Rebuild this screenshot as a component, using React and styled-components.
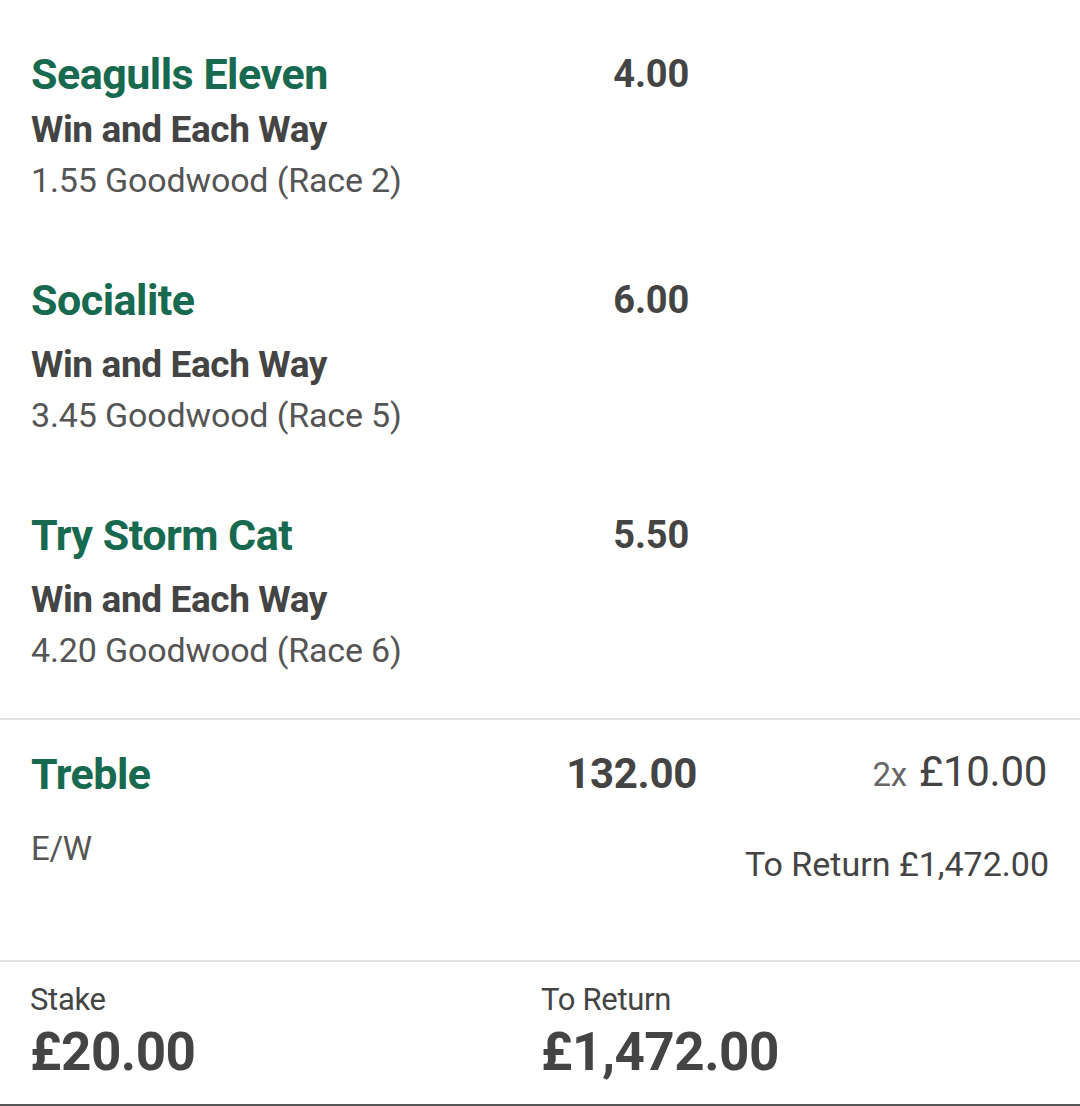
import React from 'react';
import styled, { createGlobalStyle } from 'styled-components';

const GlobalStyle = createGlobalStyle`
  html, body {
    margin: 0;
    padding: 0;
    background: #fff;
    font-family: Roboto, "Liberation Sans", sans-serif;
  }
`;

const Page = styled.div`
  width: 1080px;
  height: 1106px;
  background: #fff;
  display: flex;
  flex-direction: column;
  overflow: hidden;
  box-sizing: border-box;
  border-bottom: 2px solid #555;
`;

const Selections = styled.div`
  padding: 46px 0 0 31px;
  display: flex;
  flex-direction: column;
  gap: 67px;
`;

const Selection = styled.div`
  width: 658px;
  display: grid;
  grid-template-columns: 1fr auto;
`;

const Name = styled.div`
  font-size: 43px;
  font-weight: 700;
  letter-spacing: -0.5px;
  color: #17694f;
  line-height: 56px;
`;

const Odds = styled.div`
  font-size: 38px;
  font-weight: 700;
  letter-spacing: -0.2px;
  color: #444;
  line-height: 56px;
  text-align: right;
`;

const Market = styled.div`
  grid-column: 1 / -1;
  margin-top: ${p => p.gap}px;
  font-size: 37px;
  font-weight: 700;
  letter-spacing: -0.4px;
  color: #444;
  line-height: 50px;
`;

const Event = styled.div`
  grid-column: 1 / -1;
  font-size: 34px;
  letter-spacing: -0.15px;
  color: #555;
  line-height: 50px;
`;

const Divider = styled.div`
  height: 2px;
  background: #e2e2e2;
  margin-top: ${p => p.top}px;
`;

const Treble = styled.div`
  display: grid;
  grid-template-columns: 1fr 200px 350px;
  align-content: start;
  padding: 26px 31px 0 31px;
  height: 240px;
  box-sizing: border-box;
`;

const TrebleOdds = styled.div`
  font-size: 42px;
  font-weight: 700;
  letter-spacing: -0.3px;
  color: #444;
  line-height: 56px;
  text-align: right;
  padding-right: 2px;
`;

const Stake = styled.div`
  text-align: right;
  color: #444;
  font-size: 42px;
  letter-spacing: -0.3px;
  line-height: 52px;
  padding-right: 2px;
`;

const Multiplier = styled.span`
  font-size: 33px;
  color: #666;
  margin-right: 12px;
`;

const EachWay = styled.div`
  font-size: 33px;
  letter-spacing: -0.3px;
  color: #555;
  line-height: 48px;
  margin-top: 23px;
`;

const TrebleReturn = styled.div`
  grid-column: 2 / -1;
  text-align: right;
  font-size: 34px;
  letter-spacing: 0;
  color: #444;
  line-height: 48px;
  margin-top: 38px;
`;

const Footer = styled.div`
  display: grid;
  grid-template-columns: 511px 1fr;
  padding: 18px 30px 0 30px;
`;

const FooterLabel = styled.div`
  font-size: 31px;
  letter-spacing: -0.3px;
  color: #444;
  line-height: 40px;
`;

const FooterValue = styled.div`
  font-size: 53px;
  font-weight: 700;
  letter-spacing: -0.5px;
  color: #444;
  line-height: 64px;
`;

const selections = [
  { name: 'Seagulls Eleven', odds: '4.00', gap: 3, event: '1.55 Goodwood (Race 2)' },
  { name: 'Socialite', odds: '6.00', gap: 12, event: '3.45 Goodwood (Race 5)' },
  { name: 'Try Storm Cat', odds: '5.50', gap: 12, event: '4.20 Goodwood (Race 6)' },
];

export default function App() {
  return (
    <Page>
      <GlobalStyle />
      <Selections>
        {selections.map(s => (
          <Selection key={s.name}>
            <Name>{s.name}</Name>
            <Odds>{s.odds}</Odds>
            <Market gap={s.gap}>Win and Each Way</Market>
            <Event>{s.event}</Event>
          </Selection>
        ))}
      </Selections>
      <Divider top={43} />
      <Treble>
        <Name>Treble</Name>
        <TrebleOdds>132.00</TrebleOdds>
        <Stake><Multiplier>2x</Multiplier>£10.00</Stake>
        <EachWay>E/W</EachWay>
        <TrebleReturn>To Return £1,472.00</TrebleReturn>
      </Treble>
      <Divider top={0} />
      <Footer>
        <div>
          <FooterLabel>Stake</FooterLabel>
          <FooterValue>£20.00</FooterValue>
        </div>
        <div>
          <FooterLabel>To Return</FooterLabel>
          <FooterValue>£1,472.00</FooterValue>
        </div>
      </Footer>
    </Page>
  );
}
